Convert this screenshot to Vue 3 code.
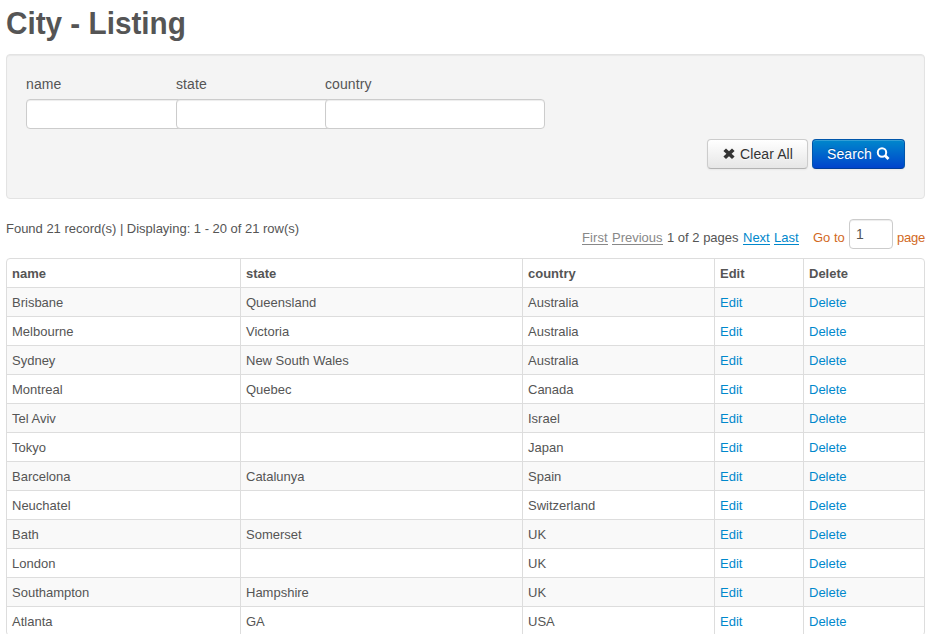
<script setup>
import { ref } from 'vue'

const filters = [
  { key: 'name', width: 150 },
  { key: 'state', width: 149 },
  { key: 'country', width: 220 },
]

const page = ref('1')

const cities = [
  ['Brisbane', 'Queensland', 'Australia'],
  ['Melbourne', 'Victoria', 'Australia'],
  ['Sydney', 'New South Wales', 'Australia'],
  ['Montreal', 'Quebec', 'Canada'],
  ['Tel Aviv', '', 'Israel'],
  ['Tokyo', '', 'Japan'],
  ['Barcelona', 'Catalunya', 'Spain'],
  ['Neuchatel', '', 'Switzerland'],
  ['Bath', 'Somerset', 'UK'],
  ['London', '', 'UK'],
  ['Southampton', 'Hampshire', 'UK'],
  ['Atlanta', 'GA', 'USA'],
]
</script>

<template>
  <main class="page">
    <h1>City - Listing</h1>

    <form class="well" @submit.prevent>
      <div class="filters">
        <label v-for="f in filters" :key="f.key" class="filter" :style="{ width: f.width + 'px' }">
          <span>{{ f.key }}</span>
          <input type="text" />
        </label>
      </div>
      <div class="actions">
        <button type="button" class="btn">
          <svg class="icon-remove" width="12" height="12" viewBox="0 0 12 12">
            <path d="M3 0.5 6 3.3 9 0.5 11.6 2.9 8.6 5.7 11.6 8.5 9 11 6 8.2 3 11 0.4 8.5 3.4 5.7 0.4 2.9Z" />
          </svg>
          <span>Clear All</span>
        </button>
        <button type="submit" class="btn primary">
          <span>Search</span>
          <svg class="icon-search" width="14" height="14" viewBox="0 0 14 14">
            <circle cx="6" cy="5.5" r="4.2" />
            <path d="M9 8.6 12.5 12" />
          </svg>
        </button>
      </div>
    </form>

    <div class="summary">
      <div class="found">Found 21 record(s) | Displaying: 1 - 20 of 21 row(s)</div>
      <div class="pager">
        <a class="off first">First</a>
        <a class="off previous">Previous</a>
        <span class="count">1 of 2 pages</span>
        <a class="next" href="#">Next</a>
        <a class="last" href="#">Last</a>
        <span class="goto">Go to</span>
        <input v-model="page" type="text" />
        <span class="goto-end">page</span>
      </div>
    </div>

    <div class="grid">
      <div class="row head">
        <div>name</div>
        <div>state</div>
        <div>country</div>
        <div>Edit</div>
        <div>Delete</div>
      </div>
      <div v-for="city in cities" :key="city[0]" class="row">
        <div>{{ city[0] }}</div>
        <div>{{ city[1] }}</div>
        <div>{{ city[2] }}</div>
        <div><a href="#">Edit</a></div>
        <div><a href="#">Delete</a></div>
      </div>
    </div>
  </main>
</template>

<style>
html,
body {
  height: 634px;
  overflow: hidden;
  background: #fff;
}
</style>

<style scoped>
.page {
  box-sizing: border-box;
  width: 943px;
  height: 634px;
  overflow: hidden;
  padding: 3px 18px 0 6px;
  font: 13px/20px 'Liberation Sans', Arial, sans-serif;
  color: #555;
}
* {
  box-sizing: border-box;
}
h1 {
  margin: 0 0 11px;
  font-size: 31.5px;
  line-height: 40px;
  font-weight: bold;
  transform: scaleX(0.943);
  transform-origin: 0 0;
}
a {
  color: #08c;
  text-decoration: none;
}
input {
  display: block;
  height: 30px;
  margin: 0;
  padding: 4px 6px;
  border: 1px solid #ccc;
  border-radius: 4px;
  background: #fff;
  box-shadow: inset 0 1px 1px rgba(0, 0, 0, 0.075);
  font: 14px/20px 'Liberation Sans', Arial, sans-serif;
  color: #555;
  outline: none;
}
.well {
  height: 145px;
  padding: 19px;
  border: 1px solid #e3e3e3;
  border-radius: 4px;
  background: #f4f4f4;
  box-shadow: inset 0 1px 1px rgba(0, 0, 0, 0.05);
}
.filters {
  display: flex;
}
.filter {
  flex: none;
  font-size: 14px;
  letter-spacing: 0.1px;
}
.filter span {
  display: block;
  margin-bottom: 5px;
}
.filter input {
  width: 220px;
}
.actions {
  display: flex;
  justify-content: flex-end;
  gap: 4px;
  margin-top: 10px;
}
.btn {
  display: flex;
  align-items: center;
  width: 101px;
  height: 30px;
  margin: 0;
  padding: 0 14px 0 15px;
  border: 1px solid #ccc;
  border-color: #ccc #ccc #b3b3b3;
  border-radius: 4px;
  background: linear-gradient(#fff, #e6e6e6);
  box-shadow: inset 0 1px 0 rgba(255, 255, 255, 0.2), 0 1px 2px rgba(0, 0, 0, 0.05);
  font: 14px/20px 'Liberation Sans', Arial, sans-serif;
  letter-spacing: 0.1px;
  color: #333;
  text-shadow: 0 1px 1px rgba(255, 255, 255, 0.75);
  white-space: nowrap;
}
.btn.primary {
  width: 93px;
  padding: 0 14px;
  border-color: #05a #05a #003d99;
  background: linear-gradient(#08c, #04c);
  color: #fff;
  text-shadow: 0 -1px 0 rgba(0, 0, 0, 0.25);
}
.icon-remove {
  flex: none;
  margin-right: 5px;
  fill: #333;
}
.icon-search {
  flex: none;
  margin-left: 4px;
  fill: none;
  stroke: #fff;
  stroke-width: 2;
}
.icon-search path {
  stroke-width: 2.8;
}
.summary {
  display: flex;
  justify-content: space-between;
  height: 59px;
  padding-top: 20px;
}
.found {
  letter-spacing: -0.015px;
}
.pager {
  display: flex;
  gap: 4px;
  white-space: nowrap;
}
.pager a,
.pager span {
  height: 16px;
  margin-top: 10px;
  line-height: 17px;
}
.pager a {
  border-bottom: 1px solid #08c;
}
.pager a.off {
  border-color: #888;
  color: #888;
}
.pager .first {
  width: 26px;
  letter-spacing: 0.1px;
}
.pager .previous {
  width: 51px;
}
.pager .count {
  width: 72px;
}
.pager .next {
  width: 27px;
}
.pager .last {
  width: 25px;
}
.pager input {
  width: 44px;
}
.pager .goto {
  width: 32px;
  margin-left: 10px;
}
.pager .goto,
.pager .goto-end {
  color: #d2691e;
}
.pager .goto-end {
  width: 28px;
  letter-spacing: -0.2px;
}
.grid {
  border: 1px solid #ddd;
  border-radius: 4px;
  overflow: hidden;
}
.row {
  display: grid;
  grid-template-columns: 233px 282px 192px 89px 1fr;
  height: 29px;
}
.row + .row {
  border-top: 1px solid #ddd;
}
.head {
  height: 28px;
  font-weight: bold;
}
.row:nth-child(even) {
  background: #f9f9f9;
}
.row > div {
  padding: 5px 5px 3px;
}
.row > div + div {
  border-left: 1px solid #ddd;
}
</style>
